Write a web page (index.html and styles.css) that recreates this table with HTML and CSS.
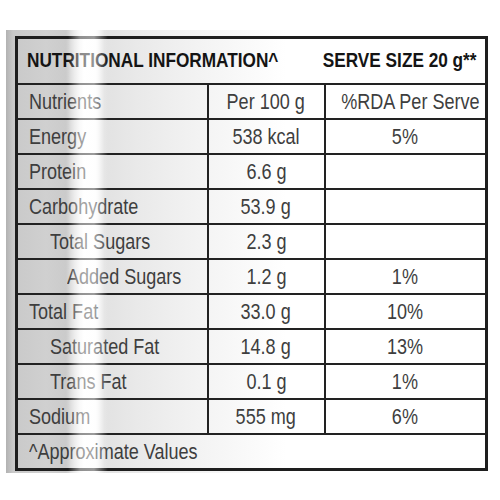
FILE: index.html
```html
<!DOCTYPE html>
<html lang="en">
<head>
  <meta charset="UTF-8">
  <title>Nutritional Information</title>
  <link rel="stylesheet" href="styles.css">
</head>
<body>
  <div class="panel">
    <table class="facts">
      <colgroup>
        <col class="c1">
        <col class="c2">
        <col class="c3">
      </colgroup>
      <tr class="head">
        <td colspan="3">
          <div class="head-row">
            <span class="t lead">NUTRITIONAL INFORMATION^</span>
            <span class="t end">SERVE SIZE 20 g**</span>
          </div>
        </td>
      </tr>
      <tr><td><span class="t">Nutrients</span></td><td><span class="t">Per 100 g</span></td><td><span class="t">%RDA Per Serve</span></td></tr>
      <tr><td><span class="t">Energy</span></td><td><span class="t">538 kcal</span></td><td><span class="t">5%</span></td></tr>
      <tr><td><span class="t">Protein</span></td><td><span class="t">6.6 g</span></td><td></td></tr>
      <tr><td><span class="t">Carbohydrate</span></td><td><span class="t">53.9 g</span></td><td></td></tr>
      <tr><td class="sub"><span class="t">Total Sugars</span></td><td><span class="t">2.3 g</span></td><td></td></tr>
      <tr><td class="sub2"><span class="t">Added Sugars</span></td><td><span class="t">1.2 g</span></td><td><span class="t">1%</span></td></tr>
      <tr><td><span class="t">Total Fat</span></td><td><span class="t">33.0 g</span></td><td><span class="t">10%</span></td></tr>
      <tr><td class="sub"><span class="t">Saturated Fat</span></td><td><span class="t">14.8 g</span></td><td><span class="t">13%</span></td></tr>
      <tr><td class="sub"><span class="t">Trans Fat</span></td><td><span class="t">0.1 g</span></td><td><span class="t">1%</span></td></tr>
      <tr><td><span class="t">Sodium</span></td><td><span class="t">555 mg</span></td><td><span class="t">6%</span></td></tr>
      <tr class="foot"><td colspan="3"><span class="t">^Approximate Values</span></td></tr>
    </table>
  </div>
</body>
</html>
```

FILE: styles.css
```css
body {
  margin: 0;
  background: #fff;
  font-family: "Liberation Sans", Arial, sans-serif;
  overflow: hidden;
}
.panel {
  position: relative;
  margin: 30px 0 0 6px;
  padding: 6px 10px 2px 9px;
  width: 473px;
  background: linear-gradient(to right, #b2b2b2 0, #c9c9c9 7px, #d0d0d0 40px, #cbcbcb 60px, #e4e4e4 68px, #ffffff 78px, #fdfdfd 90px, #e2e2e2 98px, #e9e9e9 130px, #f4f4f4 200px, #ffffff 280px);
}
/* glare from the photo, over text and lines */
.panel::after {
  content: "";
  position: absolute;
  top: 0;
  bottom: 0;
  left: 62px;
  width: 40px;
  background: linear-gradient(to right, rgba(255,255,255,0) 0, rgba(255,255,255,0.5) 30%, rgba(255,255,255,0.55) 65%, rgba(255,255,255,0) 100%);
  pointer-events: none;
}
.facts {
  width: 473px;
  table-layout: fixed;
  border-collapse: collapse;
  border: 3px solid #1e1e1e;
  color: #3e3e3e;
  font-size: 22px;
}
.c1 { width: 191px; }
.c2 { width: 117px; }
.facts td {
  border: 2px solid #222;
  height: 33px;
  padding: 0;
  text-align: center;
  line-height: 1;
  white-space: nowrap;
}
.facts td:first-child {
  text-align: left;
  padding-left: 11px;
}
.facts td.sub {
  padding-left: 32px;
}
.facts td.sub2 {
  padding-left: 49px;
}
/* narrow face: squeeze the glyphs horizontally */
.t {
  display: inline-block;
  transform: scaleX(0.82);
}
.facts td:first-child .t {
  transform-origin: left center;
}
.facts .head td {
  height: 41px;
  padding: 0 8px 3px 9px;
}
.head-row {
  display: flex;
  font-weight: bold;
  font-size: 21px;
  color: #141414;
}
.facts .head-row .t.lead {
  transform-origin: left center;
  margin-right: -56px;
}
.facts .head-row .t.end {
  margin-left: auto;
  transform-origin: right center;
}
```
